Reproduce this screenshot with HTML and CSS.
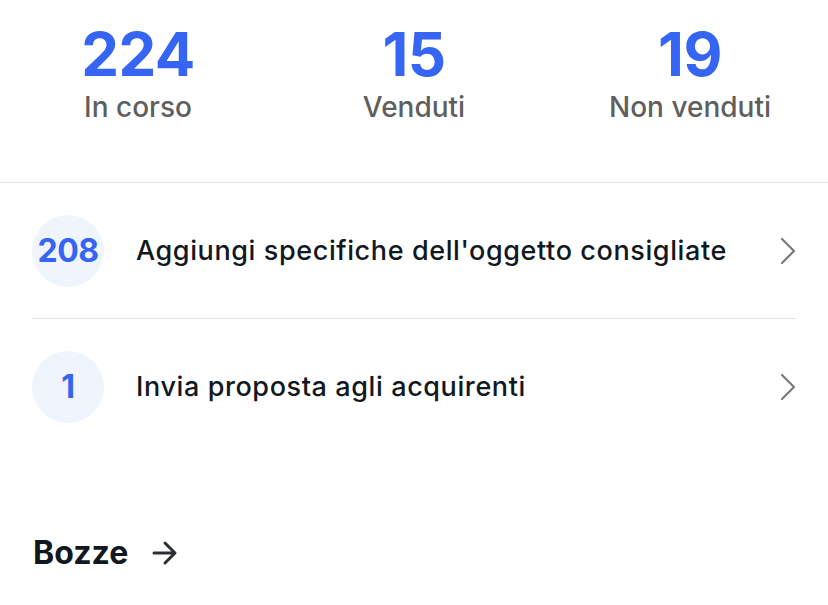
FILE: index.html
```html
<!DOCTYPE html>
<html lang="it">
<head>
<meta charset="utf-8">
<title>Vendite</title>
<link rel="stylesheet" href="styles.css">
</head>
<body>
<section class="stats">
  <div class="stat"><div class="stat-num">224</div><div class="stat-label">In corso</div></div>
  <div class="stat"><div class="stat-num">15</div><div class="stat-label">Venduti</div></div>
  <div class="stat"><div class="stat-num">19</div><div class="stat-label">Non venduti</div></div>
</section>
<ul class="tasks">
  <li class="task">
    <span class="badge">208</span>
    <span class="task-text">Aggiungi specifiche dell'oggetto consigliate</span>
    <svg class="chev" width="16" height="28" viewBox="0 0 16 28"><path d="M2 2 L14 14 L2 26" fill="none" stroke="#7a7a7a" stroke-width="2.2" stroke-linecap="round" stroke-linejoin="round"/></svg>
  </li>
  <li class="task">
    <span class="badge">1</span>
    <span class="task-text">Invia proposta agli acquirenti</span>
    <svg class="chev" width="16" height="28" viewBox="0 0 16 28"><path d="M2 2 L14 14 L2 26" fill="none" stroke="#7a7a7a" stroke-width="2.2" stroke-linecap="round" stroke-linejoin="round"/></svg>
  </li>
</ul>
<h2 class="drafts">Bozze
  <svg class="arrow" width="26" height="26" viewBox="0 0 26 26"><path d="M2 13 H23 M13 3 L23 13 L13 23" fill="none" stroke="#2b2f36" stroke-width="3" stroke-linecap="round" stroke-linejoin="round"/></svg>
</h2>
</body>
</html>
```
FILE: styles.css
```css
html, body {
  margin: 0;
  padding: 0;
  background: #ffffff;
}
body {
  font-family: Inter, "Noto Sans", sans-serif;
  color: #111820;
  width: 828px;
}
.stats {
  display: grid;
  grid-template-columns: repeat(3, 1fr);
  padding: 24px 0 61px;
  border-bottom: 1px solid #e4e4e4;
}
.stat {
  display: flex;
  flex-direction: column;
  align-items: center;
  gap: 9px;
}
.stat-num {
  font-size: 60px;
  line-height: 1;
  font-weight: 700;
  color: #3665f3;
  letter-spacing: -0.5px;
}
.stat-label {
  font-size: 28px;
  line-height: 1;
  font-weight: 500;
  color: #5f5f5f;
}
.tasks {
  list-style: none;
  margin: 0;
  padding: 0 32px;
}
.task {
  display: flex;
  align-items: center;
  height: 135px;
}
.task + .task {
  border-top: 1px solid #e4e4e4;
}
.badge {
  flex: none;
  width: 72px;
  height: 72px;
  border-radius: 50%;
  background: #eff4fd;
  color: #3665f3;
  font-size: 32px;
  font-weight: 700;
  display: flex;
  align-items: center;
  justify-content: center;
  letter-spacing: -0.5px;
}
.task-text {
  flex: 1;
  margin-left: 32px;
  font-size: 27px;
  font-weight: 500;
  letter-spacing: 0.6px;
  color: #111820;
}
.chev {
  flex: none;
}
.drafts {
  display: flex;
  align-items: center;
  gap: 24px;
  margin: 83px 0 0 33px;
  font-size: 32px;
  line-height: 1;
  font-weight: 700;
  color: #111820;
}
```
